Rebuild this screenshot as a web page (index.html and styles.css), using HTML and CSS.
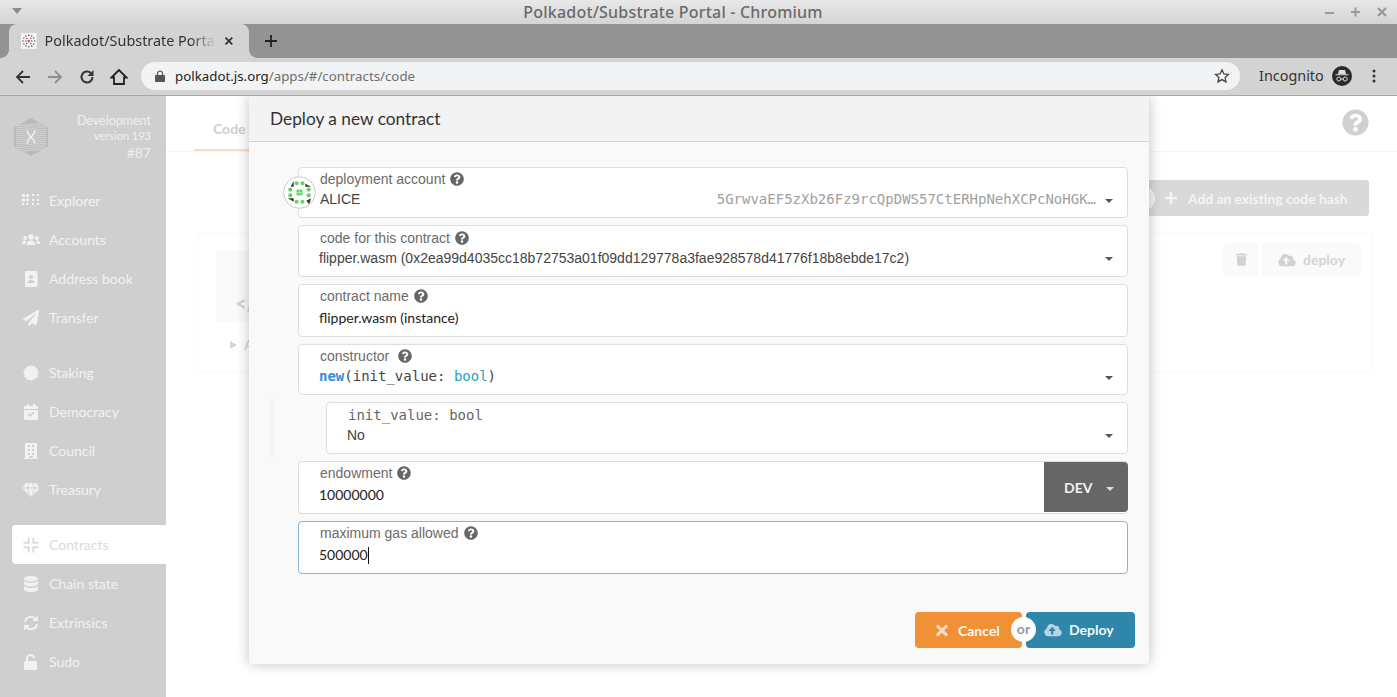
FILE: index.html
```html
<!DOCTYPE html>
<html>

<head>
<meta charset="UTF-8">
	<title>Polkadot/Substrate Portal</title>
	<link rel="stylesheet" href="styles.css">
</head>

<body>
	<!-- icons used more than once -->
	<svg class="sprite" xmlns="http://www.w3.org/2000/svg">
		<symbol id="i-help" viewBox="0 0 512 512"><path d="M504 256c0 136.997-111.043 248-248 248S8 392.997 8 256C8 119.083 119.043 8 256 8s248 111.083 248 248zM262.655 90c-54.497 0-89.255 22.957-116.549 63.758-3.536 5.286-2.353 12.415 2.715 16.258l34.699 26.31c5.205 3.947 12.621 3.008 16.665-2.122 17.864-22.658 30.113-35.797 57.303-35.797 20.429 0 45.698 13.148 45.698 32.958 0 14.976-12.363 22.667-32.534 33.976C247.128 238.528 216 254.941 216 296v4c0 6.627 5.373 12 12 12h56c6.627 0 12-5.373 12-12v-1.333c0-28.462 83.186-29.647 83.186-106.667 0-58.002-60.165-102-116.531-102zM256 338c-25.365 0-46 20.635-46 46 0 25.364 20.635 46 46 46s46-20.636 46-46c0-25.365-20.635-46-46-46z"/></symbol>
		<symbol id="i-cloud" viewBox="0 0 640 512"><path d="M537.6 226.6c4.1-10.7 6.4-22.4 6.4-34.6 0-53-43-96-96-96-19.7 0-38.1 6-53.3 16.2C367 64.2 315.3 32 256 32c-88.4 0-160 71.6-160 160 0 2.7.1 5.4.2 8.1C40.2 219.8 0 273.2 0 336c0 79.5 64.5 144 144 144h368c70.7 0 128-57.3 128-128 0-61.9-44-113.6-102.4-125.4zM393.4 288H328v112c0 8.8-7.2 16-16 16h-48c-8.8 0-16-7.2-16-16V288h-65.4c-14.3 0-21.4-17.2-11.3-27.3l105.4-105.4c6.2-6.2 16.4-6.2 22.6 0l105.4 105.4c10.1 10.1 2.9 27.3-11.3 27.3z"/></symbol>
	</svg>

	<!-- window title -->
	<div class="titlebar">
		<span class="win-menu"></span>
		<span class="win-title">Polkadot/Substrate Portal - Chromium</span>
		<div class="win-buttons">
			<svg width="12" height="12" viewBox="0 0 12 12"><path d="M1 7h9" stroke="#9a9a9a" stroke-width="2"/></svg>
			<svg width="12" height="12" viewBox="0 0 12 12"><path d="M1 6h9M5.500 1.500v9" stroke="#9a9a9a" stroke-width="2"/></svg>
			<svg width="12" height="12" viewBox="0 0 12 12"><path d="M2 2l8 8M10 2l-8 8" stroke="#9a9a9a" stroke-width="2.400"/></svg>
		</div>
	</div>

	<!-- tabs -->
	<div class="tabstrip">
		<div class="tab">
			<svg class="favicon" width="16" height="16" viewBox="0 0 16 16">
				<rect width="16" height="16" fill="#f7f7f7"/>
				<g fill="#555">
					<circle cx="8" cy="2" r=".8"/><circle cx="5" cy="3" r=".8"/><circle cx="11" cy="3" r=".8"/>
					<circle cx="3" cy="5" r=".8"/><circle cx="6" cy="5.500" r=".8"/><circle cx="10" cy="5.500" r=".8"/><circle cx="13" cy="5" r=".8"/>
					<circle cx="2" cy="8" r=".8"/><circle cx="5" cy="8" r=".8"/><circle cx="11" cy="8" r=".8"/><circle cx="14" cy="8" r=".8"/>
					<circle cx="3" cy="11" r=".8"/><circle cx="6" cy="10.500" r=".8"/><circle cx="10" cy="10.500" r=".8"/><circle cx="13" cy="11" r=".8"/>
					<circle cx="5" cy="13" r=".8"/><circle cx="8" cy="14" r=".8"/><circle cx="11" cy="13" r=".8"/>
				</g>
				<circle cx="8" cy="8" r="1.300" fill="#d6409f"/>
			</svg>
			<span class="tab-title">Polkadot/Substrate Portal</span>
			<svg class="tab-close" width="10" height="10" viewBox="0 0 10 10"><path d="M1.500 1.500l7 7M8.500 1.500l-7 7" stroke="#333" stroke-width="1.800"/></svg>
		</div>
		<svg class="new-tab" width="14" height="14" viewBox="0 0 14 14"><path d="M7 1v12M1 7h12" stroke="#222" stroke-width="1.800"/></svg>
	</div>

	<!-- toolbar -->
	<div class="toolbar">
		<svg class="nav" width="16" height="16" viewBox="0 0 16 16"><path d="M15 8H2M8 2L2 8l6 6" fill="none" stroke="#333" stroke-width="1.800"/></svg>
		<svg class="nav" width="16" height="16" viewBox="0 0 16 16"><path d="M1 8h13M8 2l6 6-6 6" fill="none" stroke="#8e8e8e" stroke-width="1.800"/></svg>
		<svg class="nav" width="16" height="16" viewBox="0 0 16 16"><path d="M13.500 8A5.500 5.500 0 1 1 11.800 4" fill="none" stroke="#333" stroke-width="2"/><path d="M14.500 1v6h-6z" fill="#333"/></svg>
		<svg class="nav home" width="18" height="18" viewBox="0 0 18 18"><path d="M9 2L1.500 9.500H4V16h10V9.500h2.500z" fill="none" stroke="#222" stroke-width="1.800"/></svg>
		<div class="omnibox">
			<svg width="10" height="12" viewBox="0 0 10 12"><path d="M2.500 5V3.500a2.500 2.500 0 0 1 5 0V5" fill="none" stroke="#555" stroke-width="1.200"/><rect y="5" width="10" height="7" rx="1" fill="#555"/></svg>
			<span class="url"><b>polkadot.js.org</b>/apps/#/contracts/code</span>
			<svg class="star" width="16" height="16" viewBox="0 0 16 16"><path d="M8 1.800l1.900 4.100 4.500.5-3.300 3 .9 4.500L8 11.600 4 13.900l.9-4.500-3.300-3 4.500-.5z" fill="none" stroke="#444" stroke-width="1.300"/></svg>
		</div>
		<span class="incognito">Incognito</span>
		<svg class="spy" width="20" height="20" viewBox="0 0 20 20">
			<circle cx="10" cy="10" r="10" fill="#2b2b2b"/>
			<path d="M6 8l1-4h6l1 4zM3.500 8.200h13v1h-13z" fill="#ddd"/>
			<circle cx="6.800" cy="13" r="2" fill="none" stroke="#ddd"/><circle cx="13.200" cy="13" r="2" fill="none" stroke="#ddd"/>
			<path d="M8.800 13h2.400" stroke="#ddd"/>
		</svg>
		<svg class="kebab" width="4" height="14" viewBox="0 0 4 14"><circle cx="2" cy="2" r="1.500" fill="#333"/><circle cx="2" cy="7" r="1.500" fill="#333"/><circle cx="2" cy="12" r="1.500" fill="#333"/></svg>
	</div>

	<div class="app">
		<!-- side menu -->
		<div class="sidebar">
			<div class="brand">
				<svg width="34" height="38" viewBox="0 0 34 38">
					<clipPath id="hex"><path d="M17 0l17 9.500v19L17 38 0 28.500v-19z"/></clipPath>
					<path d="M17 0l17 9.500v19L17 38 0 28.500v-19z" fill="#bababa"/>
					<g clip-path="url(#hex)" stroke="#d6d6d6" stroke-width=".9">
						<path d="M2 8l30-3M2 10l30-3M2 12l30-3M2 14l30-3M2 16l30-3M2 18l30-3M2 20l30-3M2 22l30-3M2 24l30-3M2 26l30-3M2 28l30-3M2 30l30-3M2 32l30-3M2 34l30-3"/>
					</g>
					<path d="M13 12c0 6 8 8 8 14M21 12c0 6-8 8-8 14" fill="none" stroke="#f0f0f0" stroke-width="1.400"/>
				</svg>
				<div class="brand-text">
					<div class="chain">Development</div>
					<div class="version">version 193</div>
					<div class="block">#87</div>
				</div>
			</div>

			<a class="item">
				<svg class="ico" viewBox="0 0 18 14"><g fill="#f2f2f2"><rect width="3" height="3" rx=".5"/><rect x="4" width="3" height="3" rx=".5"/><rect y="4.500" width="3" height="3" rx=".5"/><rect x="4" y="4.500" width="3" height="3" rx=".5"/><rect y="9" width="2" height="2"/><rect x="4" y="9" width="2" height="2"/><rect x="10" width="2" height="2"/><rect x="15" width="2" height="2"/><rect x="10" y="5" width="2" height="2"/><rect x="15" y="5" width="2" height="2"/><rect x="10" y="9" width="2" height="2"/><rect x="15" y="9" width="2" height="2"/></g></svg>
				Explorer
			</a>
			<a class="item">
				<svg class="ico" viewBox="0 0 18 14"><g fill="#f2f2f2"><circle cx="9" cy="4" r="2.800"/><circle cx="3.200" cy="5" r="1.900"/><circle cx="14.800" cy="5" r="1.900"/><path d="M4.500 12c0-3 2-4.500 4.500-4.500s4.500 1.500 4.500 4.500zM0 11c0-2 1-3.500 3-3.500l1 .5-1 3zM18 11c0-2-1-3.500-3-3.500l-1 .5 1 3z"/></g></svg>
				Accounts
			</a>
			<a class="item">
				<svg class="ico" viewBox="0 0 18 16"><path d="M3 0h11a1.500 1.500 0 0 1 1.500 1.500v13A1.500 1.500 0 0 1 14 16H3zM9 4a2 2 0 1 0 0 4 2 2 0 0 0 0-4zM5.500 12h7c0-2-1.500-3.300-3.500-3.300S5.500 10 5.500 12z" fill="#f2f2f2" fill-rule="evenodd"/></svg>
				Address book
			</a>
			<a class="item">
				<svg class="ico" viewBox="0 0 512 512"><path fill="#f2f2f2" d="M476 3.200L12.500 270.600c-18.100 10.400-15.800 35.600 2.200 43.200L121 358.400l287.300-253.200c5.500-4.900 13.300 2.600 8.600 8.300L176 407v80.500c0 23.600 28.500 32.900 42.500 15.800L282 426l124.600 52.200c14.200 6 30.400-2.900 33-18.200l72-432C515 7.800 493.300-6.800 476 3.200z"/></svg>
				Transfer
			</a>

			<div class="menu-gap"></div>

			<a class="item">
				<svg class="ico" viewBox="0 0 16 16"><polygon fill="#f2f2f2" points="16,8 14.380,9.710 14.930,12 12.670,12.670 12,14.930 9.710,14.380 8,16 6.290,14.380 4,14.930 3.330,12.670 1.070,12 1.620,9.710 0,8 1.620,6.290 1.070,4 3.330,3.330 4,1.070 6.290,1.620 8,0 9.710,1.620 12,1.070 12.670,3.330 14.930,4 14.380,6.290"/></svg>
				Staking
			</a>
			<a class="item">
				<svg class="ico" viewBox="0 0 14 16"><path fill="#f2f2f2" fill-rule="evenodd" d="M3 0h2v2h4V0h2v2h2a1 1 0 0 1 1 1v2H0V3a1 1 0 0 1 1-1h2zM0 6h14v9a1 1 0 0 1-1 1H1a1 1 0 0 1-1-1zM3.500 10.500L6 13l4.500-4.500-1-1L6 11 4.500 9.500z"/></svg>
				Democracy
			</a>
			<a class="item">
				<svg class="ico" viewBox="0 0 14 16"><path fill="#f2f2f2" fill-rule="evenodd" d="M1 0h12v15h1v1H0v-1h1zM4 2v2h2V2zM8 2v2h2V2zM4 6v2h2V6zM8 6v2h2V6zM4 10v2h2v-2zM8 10v2h2v-2zM5.500 13v2h3v-2z"/></svg>
				Council
			</a>
			<a class="item">
				<svg class="ico" viewBox="0 0 18 16"><path fill="#f2f2f2" d="M4 1h3L5 5.500H.5zM8 1h2l2 4.500H6zM11 1h3l3.500 4.500H13zM.5 6.500H5l3 7.500zM6 6.500h6l-3 9zM13 6.500h4.500L10 14z"/></svg>
				Treasury
			</a>

			<div class="menu-gap"></div>

			<a class="item active">
				<svg class="ico" viewBox="0 0 14 14"><path fill="none" stroke="#dcdcdc" stroke-width="1.600" d="M5 .5v4.500H.5M9 .5v4.500h4.500M5 13.500V9H.5M9 13.500V9h4.500"/></svg>
				Contracts
			</a>
			<a class="item">
				<svg class="ico" viewBox="0 0 14 16"><g fill="#f2f2f2"><ellipse cx="7" cy="2.800" rx="7" ry="2.800"/><path d="M0 4.800c1.500 1.500 4 2 7 2s5.500-.5 7-2v3c0 1.500-3 2.800-7 2.800S0 9.300 0 7.800zM0 10c1.500 1.500 4 2 7 2s5.500-.5 7-2v3.200C14 14.700 11 16 7 16s-7-1.300-7-2.800z"/></g></svg>
				Chain state
			</a>
			<a class="item">
				<svg class="ico" viewBox="0 0 16 16"><path fill="none" stroke="#f2f2f2" stroke-width="2" d="M2 7a6 6 0 0 1 10.500-3M14 9a6 6 0 0 1-10.500 3"/><path fill="#f2f2f2" d="M15 .5V6H9.500zM1 15.500V10h5.500z"/></svg>
				Extrinsics
			</a>
			<a class="item">
				<svg class="ico" viewBox="0 0 14 16"><path fill="none" stroke="#f2f2f2" stroke-width="2" d="M3 7V4.500a3.500 3.500 0 0 1 7 0"/><rect y="7" width="13" height="9" rx="1.500" fill="#f2f2f2"/></svg>
				Sudo
			</a>
		</div>

		<!-- page behind the dialog -->
		<div class="page">
			<div class="page-head">
				<span class="page-tab">Code</span>
				<svg class="page-help" width="27" height="27"><use href="#i-help"/></svg>
			</div>
			<div class="page-actions">
				<button class="add-hash">
					<span class="add-or"></span>
					<svg width="12" height="12" viewBox="0 0 14 14"><path d="M5.500 0h3v5.500H14v3H8.500V14h-3V8.500H0v-3h5.500z" fill="#f4f4f4"/></svg>
					Add an existing code hash
				</button>
			</div>
			<div class="code-card">
				<div class="card-top">
					<div class="card-thumb"><span class="thumb-code">&lt;/</span></div>
					<div class="card-actions">
						<span class="ghost-btn">
							<svg width="11" height="13" viewBox="0 0 448 512"><path fill="#d2d2d2" d="M432 32H312l-9.400-18.700A24 24 0 0 0 281.100 0H166.800a23.720 23.720 0 0 0-21.400 13.300L136 32H16A16 16 0 0 0 0 48v32a16 16 0 0 0 16 16h416a16 16 0 0 0 16-16V48a16 16 0 0 0-16-16zM53.200 467a48 48 0 0 0 47.900 45h245.800a48 48 0 0 0 47.900-45L416 128H32z"/></svg>
						</span>
						<span class="ghost-btn ghost-deploy">
							<svg class="cloud-grey" width="18" height="14"><use href="#i-cloud"/></svg>
							deploy
						</span>
					</div>
				</div>
				<div class="card-abi"><span class="abi-arrow"></span>A</div>
			</div>
		</div>

		<!-- deploy dialog -->
		<div class="modal">
			<div class="modal-head">Deploy a new contract</div>
			<div class="modal-body">
				<div class="field h51">
					<svg class="identicon" width="33" height="33" viewBox="0 0 34 34">
						<circle cx="17" cy="17" r="16.300" fill="#fff" fill-opacity=".88" stroke="#c8c8c8"/>
						<g fill="#63d265">
							<circle cx="14" cy="7.500" r="2.100"/><circle cx="20" cy="7.500" r="2.100"/>
							<circle cx="7.500" cy="14" r="2.100"/><circle cx="26.500" cy="14" r="2.100"/>
							<circle cx="7.500" cy="20" r="2.100"/><circle cx="26.500" cy="20" r="2.100"/>
							<circle cx="14" cy="26.500" r="2.100"/><circle cx="20" cy="26.500" r="2.100"/>
							<rect x="14" y="14" width="6" height="6"/>
						</g>
						<rect x="16.500" y="14" width="1" height="6" fill="#a8e6a9"/>
						<rect x="14" y="16.500" width="6" height="1" fill="#a8e6a9"/>
						<path fill="#333" d="M11 5L8 11h3zM23 8l6 3h-6zM5 23l6 3.500V23zM29 23l-2 6-3-3.500z"/>
					</svg>
					<div class="field-label">deployment account <svg class="help"><use href="#i-help"/></svg></div>
					<div class="field-value acct">
						<span>ALICE</span>
						<span class="address">5GrwvaEF5zXb26Fz9rcQpDWS57CtERHpNehXCPcNoHGK…</span>
					</div>
					<span class="caret"></span>
				</div>

				<div class="field h52">
					<div class="field-label">code for this contract <svg class="help"><use href="#i-help"/></svg></div>
					<div class="field-value">flipper.wasm (0x2ea99d4035cc18b72753a01f09dd129778a3fae928578d41776f18b8ebde17c2)</div>
					<span class="caret"></span>
				</div>

				<div class="field h53">
					<div class="field-label">contract name <svg class="help"><use href="#i-help"/></svg></div>
					<div class="field-input">flipper.wasm (instance)</div>
				</div>

				<div class="field h51">
					<div class="field-label">constructor <svg class="help help-wide"><use href="#i-help"/></svg></div>
					<div class="field-value mono"><b class="fn">new</b>(init_value: <span class="type">bool</span>)</div>
					<span class="caret"></span>
				</div>

				<div class="params">
					<div class="field h52 nested">
						<div class="field-label mono param-label">init_value: bool</div>
						<div class="field-value">No</div>
						<span class="caret"></span>
					</div>
				</div>

				<div class="field h53 with-unit">
					<div class="field-label">endowment <svg class="help"><use href="#i-help"/></svg></div>
					<div class="field-input">10000000</div>
					<div class="unit">DEV <span class="caret caret-light"></span></div>
				</div>

				<div class="field h53 focused">
					<div class="field-label">maximum gas allowed <svg class="help"><use href="#i-help"/></svg></div>
					<div class="field-input">500000<span class="cursor"></span></div>
				</div>
			</div>

			<div class="modal-foot">
				<button class="btn btn-cancel">
					<svg width="12" height="17" viewBox="0 0 352 512"><path fill="#fbdcc0" d="M242.720 256l100.070-100.070c12.280-12.280 12.280-32.190 0-44.480l-22.240-22.240c-12.280-12.280-32.190-12.280-44.480 0L176 189.280 75.930 89.210c-12.280-12.280-32.190-12.280-44.480 0L9.210 111.450c-12.280 12.280-12.280 32.190 0 44.480L109.280 256 9.210 356.070c-12.280 12.280-12.280 32.190 0 44.480l22.240 22.240c12.280 12.280 32.200 12.280 44.480 0L176 322.720l100.070 100.070c12.280 12.280 32.200 12.280 44.480 0l22.240-22.240c12.280-12.280 12.280-32.190 0-44.480L242.720 256z"/></svg>
					Cancel
				</button>
				<span class="or">or</span>
				<button class="btn btn-deploy">
					<svg class="cloud-blue" width="18" height="14"><use href="#i-cloud"/></svg>
					<span class="btn-text">Deploy</span>
				</button>
			</div>
		</div>
	</div>
</body>

</html>
```

FILE: styles.css
```css
* {
  box-sizing: border-box;
}

html,
body {
  margin: 0;
  height: 697px;
  overflow: hidden;
}

body {
  font-family: "Lato", sans-serif;
  font-size: 14px;
  background: #fff;
}

.sprite {
  display: none;
}

/* browser chrome */
.titlebar {
  height: 24px;
  display: flex;
  align-items: center;
  justify-content: center;
  position: relative;
  background: linear-gradient(#e8e8e8, #d4d4d4);
}

.win-menu {
  position: absolute;
  left: 12px;
  top: 8px;
  border-left: 5px solid transparent;
  border-right: 5px solid transparent;
  border-top: 6px solid #8c8c8c;
}

.win-title {
  font-family: "Noto Sans", sans-serif;
  font-size: 16px;
  font-weight: 500;
  letter-spacing: 0.2px;
  color: #6a6a6a;
  margin-left: -51px;
}

.win-buttons {
  position: absolute;
  right: 9px;
  top: 6px;
  display: flex;
  gap: 14px;
}

.tabstrip {
  height: 34px;
  display: flex;
  align-items: center;
  background: #939393;
  padding-left: 9px;
}

.tab {
  position: relative;
  width: 240px;
  height: 34px;
  display: flex;
  align-items: center;
  background: #d3d3d3;
  border-radius: 8px 8px 0 0;
  padding: 0 15px 0 12px;
}

/* flared feet of the active tab */
.tab::before,
.tab::after {
  content: "";
  position: absolute;
  bottom: 0;
  width: 8px;
  height: 8px;
}

.tab::before {
  left: -8px;
  background: radial-gradient(circle at 0 0, #939393 7.500px, #d3d3d3 8px);
}

.tab::after {
  right: -8px;
  background: radial-gradient(circle at 100% 0, #939393 7.500px, #d3d3d3 8px);
}

.tab-title {
  font-family: "Noto Sans", sans-serif;
  font-size: 14.400px;
  color: #333;
  margin-left: 8px;
  margin-top: -2px;
  width: 176px;
  white-space: nowrap;
  overflow: hidden;
  -webkit-mask-image: linear-gradient(to right, #000 85%, transparent);
  mask-image: linear-gradient(to right, #000 85%, transparent);
}

.tab-close {
  margin-left: 8px;
}

.new-tab {
  margin-left: 15px;
}

.toolbar {
  height: 38px;
  display: flex;
  align-items: center;
  background: #d3d3d3;
  border-bottom: 1px solid #a8a8a8;
  padding-left: 15px;
}

.nav {
  margin-right: 16px;
}

.nav.home {
  margin-left: -1px;
  margin-right: 13px;
}

.omnibox {
  width: 1099px;
  height: 28px;
  display: flex;
  align-items: center;
  background: #f1f3f4;
  border-radius: 14px;
  padding: 0 10px 0 14px;
  margin-top: -1px;
}

.url {
  font-family: "Noto Sans", sans-serif;
  font-size: 13.300px;
  color: #6f6f6f;
  margin-left: 10px;
  margin-top: -1px;
  flex: 1;
}

.url b {
  font-weight: 400;
  color: #222;
}

.incognito {
  font-family: "Noto Sans", sans-serif;
  font-size: 14.400px;
  color: #333;
  margin-left: 19px;
  margin-top: -2px;
}

.spy {
  margin-left: 8px;
  margin-top: -1px;
}

.kebab {
  margin-left: 20px;
  margin-top: -1px;
}

/* app */
.app {
  height: 601px;
  display: flex;
  position: relative;
  overflow: hidden;
}

.sidebar {
  width: 166px;
  flex: none;
  background: #cfcfcf;
  padding-left: 12px;
  color: #f2f2f2;
}

.brand {
  height: 85px;
  display: flex;
  justify-content: space-between;
  padding: 22px 15px 0 2px;
}

.brand-text {
  text-align: right;
  color: #efefef;
  margin-top: -5px;
}

.chain {
  font-size: 12.500px;
  line-height: 16px;
}

.version {
  font-size: 11px;
  line-height: 14px;
}

.block {
  font-size: 14px;
  line-height: 20px;
}

.item {
  height: 39px;
  display: flex;
  align-items: center;
  gap: 9px;
  padding-left: 10px;
  font-size: 14px;
  color: #f2f2f2;
}

.ico {
  width: 18px;
  height: 16px;
  flex: none;
}

.item.active {
  background: #fff;
  border-radius: 4px 0 0 4px;
  color: #dcdcdc;
}

.menu-gap {
  height: 16px;
}

/* page behind the dialog, washed out */
.page {
  flex: 1;
  background: #fff;
  color: #d4d4d4;
  font-size: 14px;
}

.page-head {
  height: 56px;
  display: flex;
  justify-content: space-between;
  align-items: center;
  border-bottom: 1px solid #f5f5f5;
  padding: 0 28px;
}

.page-tab {
  width: 60px;
  height: 55px;
  line-height: 66px;
  font-weight: 700;
  color: #cfcfcf;
  padding-left: 19px;
  border-bottom: 2px solid #f9dfc6;
}

.page-help {
  fill: #d0d0d0;
  margin-top: -2px;
}

.page-actions {
  display: flex;
  justify-content: flex-end;
  padding: 28px 28px 0 0;
}

.add-hash {
  position: relative;
  width: 230px;
  height: 36px;
  display: flex;
  align-items: center;
  gap: 11px;
  border: none;
  border-radius: 3px;
  background: #d9d9d9;
  color: #f4f4f4;
  font-family: inherit;
  font-size: 13.800px;
  font-weight: 700;
  padding: 0 0 0 26px;
  white-space: nowrap;
}

.add-or {
  position: absolute;
  left: -9px;
  top: 6px;
  width: 25px;
  height: 25px;
  border-radius: 50%;
  background: #f4f4f4;
}

.code-card {
  margin: 17px 25px 0 31px;
  height: 139px;
  border: 1px solid #fafafa;
  padding: 17px 10px 0 18px;
}

.card-top {
  display: flex;
  justify-content: space-between;
}

.card-thumb {
  width: 400px;
  height: 70px;
  background: #fafafa;
  padding: 40px 0 0 19px;
}

.thumb-code {
  font-weight: 900;
  font-size: 20px;
  line-height: 24px;
  color: #d4d4d4;
}

.card-actions {
  display: flex;
  gap: 3px;
  margin-top: -8px;
}

.ghost-btn {
  width: 36px;
  height: 33px;
  display: flex;
  align-items: center;
  justify-content: center;
  gap: 7px;
  background: #fafafa;
  border-radius: 3px;
  font-weight: 700;
  color: #d4d4d4;
}

.ghost-deploy {
  width: 99px;
}

.cloud-grey {
  fill: #d2d2d2;
}

.card-abi {
  display: flex;
  align-items: center;
  gap: 7px;
  margin: 15px 0 0 14px;
  color: #d4d4d4;
}

.abi-arrow {
  border-left: 7px solid #d4d4d4;
  border-top: 4px solid transparent;
  border-bottom: 4px solid transparent;
}

/* dialog */
.modal {
  position: absolute;
  left: 249px;
  top: 0;
  width: 900px;
  height: 568px;
  display: flex;
  flex-direction: column;
  background: #f9f9f9;
  border-radius: 0 0 4px 4px;
  box-shadow: 0 0 14px rgba(0, 0, 0, 0.25);
}

.modal-head {
  height: 46px;
  flex: none;
  background: #f3f3f3;
  border-bottom: 1px solid #d4d4d4;
  font-size: 17.300px;
  line-height: 45px;
  color: #333;
  padding-left: 21px;
}

.modal-body {
  display: flex;
  flex-direction: column;
  gap: 7px;
  padding: 25px 21px 0 49px;
}

.field {
  position: relative;
  background: #fff;
  border: 1px solid #dedede;
  border-radius: 4px;
  padding: 3px 0 0 21px;
  color: #333;
}

.h51 {
  height: 51px;
}

.h52 {
  height: 52px;
  padding-top: 4px;
}

.h53 {
  height: 53px;
}

.field-label {
  height: 16px;
  display: flex;
  align-items: center;
  gap: 5px;
  font-family: "Liberation Sans", sans-serif;
  font-size: 14px;
  line-height: 16px;
  color: #6b6b6b;
}

.help {
  width: 14px;
  height: 14px;
  fill: #666;
}

.help-wide {
  margin-left: 4px;
}

.field-value {
  font-family: "Liberation Sans", sans-serif;
  font-size: 14px;
  line-height: 18px;
  margin-top: 3px;
  color: #444;
  margin-left: -1px;
}

.field-input {
  font-size: 14px;
  line-height: 18px;
  margin-top: 5px;
  color: #222;
  margin-left: -1px;
}

.mono {
  font-family: "DejaVu Sans Mono", monospace;
  font-size: 14px;
}

.fn {
  color: #2f8ddb;
}

.type {
  color: #26a3b8;
}

.acct {
  margin-left: 0;
  display: flex;
  justify-content: space-between;
  padding-right: 31px;
}

.address {
  font-family: "DejaVu Sans Mono", monospace;
  font-size: 14px;
  color: #a0a0a0;
}

.caret {
  position: absolute;
  right: 14px;
  bottom: 14px;
  border-left: 4px solid transparent;
  border-right: 4px solid transparent;
  border-top: 4px solid #555;
}

.h52 .caret {
  bottom: 15px;
}

.identicon {
  position: absolute;
  left: -16px;
  top: 8px;
}

.params {
  margin-left: -28px;
  padding: 3px 0 3px 56px;
  margin-top: -3px;
  margin-bottom: -3px;
  border-left: 4px solid #f2f2f2;
}

.nested {
  margin-left: -4px;
}

.param-label {
  color: #666;
}

.with-unit {
  border-right: none;
}

.unit {
  position: absolute;
  right: 0;
  top: 0;
  width: 84px;
  height: 50px;
  display: flex;
  align-items: center;
  background: #666;
  border-radius: 0 4px 4px 0;
  color: #f2f2f2;
  font-size: 14px;
  font-weight: 700;
  padding-left: 20px;
}

.caret-light {
  border-top-color: #ddd;
  bottom: 21px;
}

.focused {
  border-color: #85b7d9;
}

.cursor {
  display: inline-block;
  width: 1px;
  height: 17px;
  background: #111;
  vertical-align: -4px;
}

.modal-foot {
  position: relative;
  flex: none;
  display: flex;
  justify-content: flex-end;
  padding: 38px 14px 0 0;
}

.btn {
  height: 36px;
  display: flex;
  align-items: center;
  gap: 10px;
  border: none;
  color: #f6f6f6;
  font-family: inherit;
  font-size: 14px;
  font-weight: 700;
}

.btn-cancel {
  width: 107px;
  background: #f19135;
  border-radius: 4px;
  padding-left: 21px;
}

.btn-deploy {
  width: 109px;
  margin-left: 4px;
  background: #2e86ab;
  border-radius: 4px;
  padding-left: 18px;
  gap: 7px;
}

.btn-text {
  margin-top: -2px;
}

.cloud-blue {
  fill: #b6d4e2;
}

.or {
  position: absolute;
  right: 113px;
  top: 43px;
  width: 25px;
  height: 25px;
  background: #fff;
  border-radius: 50%;
  text-align: center;
  line-height: 24px;
  font-weight: 700;
  color: #999;
}
```
